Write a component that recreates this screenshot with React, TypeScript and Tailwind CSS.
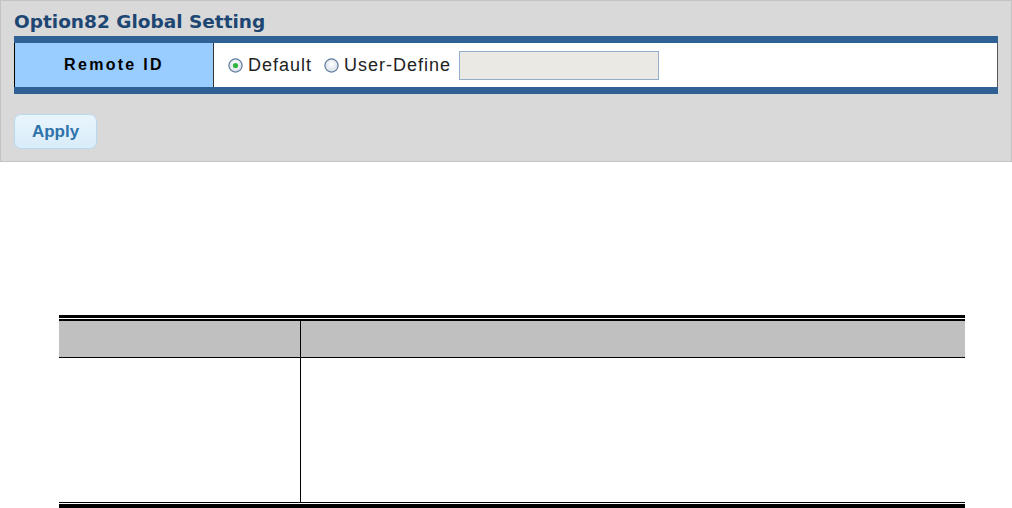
import React from "react";

function Radio({ checked }: { checked: boolean }) {
  return (
    <svg width="15" height="15" viewBox="0 0 15 15" className="shrink-0">
      <defs>
        <radialGradient id={checked ? "rg1" : "rg2"} cx="50%" cy="40%" r="60%">
          <stop offset="0%" stopColor="#ffffff" />
          <stop offset="100%" stopColor="#d6dde6" />
        </radialGradient>
      </defs>
      <circle cx="7.5" cy="7.5" r="6.6" fill={`url(#${checked ? "rg1" : "rg2"})`} stroke="#5f7d9f" strokeWidth="1.2" />
      {checked && <circle cx="7.5" cy="7.5" r="2.6" fill="#2fb43c" />}
    </svg>
  );
}

export default function App() {
  const sans = { fontFamily: '"Liberation Sans", Arial, sans-serif' };
  return (
    <div className="w-[1012px] h-[508px] bg-white overflow-hidden" style={sans}>
      <div className="h-[162px] border border-[#c3c3c3] bg-[#d9d9d9] px-[13px]">
        <div
          className="h-[35px] pt-[10px] text-[18.5px] leading-[22px] font-bold text-[#1d4672] whitespace-nowrap"
          style={{ fontFamily: '"DejaVu Sans", Verdana, sans-serif' }}
        >
          Option82 Global Setting
        </div>
        <div className="flex flex-col w-[984px]">
          <div className="h-[7px] bg-[#2f6195]" />
          <div className="flex h-[44px] bg-white border-l border-black border-r border-r-[#555555]">
            <div className="w-[199px] bg-[#99ccff] border-r border-[#333333] flex items-center justify-center text-[16px] font-bold tracking-[2.3px] text-black">
              Remote ID
            </div>
            <div className="flex-1 flex items-center pl-[14px] text-[18px] tracking-[1px] text-[#222222]">
              <Radio checked />
              <span className="ml-[5px]">Default</span>
              <span className="ml-[12px] flex items-center">
                <Radio checked={false} />
              </span>
              <span className="ml-[5px]">User-Define</span>
              <div className="ml-[8px] w-[200px] h-[29px] bg-[#ebe9e3] border border-[#94aecb]" />
            </div>
          </div>
          <div className="h-[7px] bg-[#2f6195]" />
        </div>
        <div className="mt-[20px] w-[83px] h-[35px] rounded-[7px] border border-[#b9d9f1] bg-gradient-to-b from-[#e9f5fd] to-[#d9ecf9] flex items-center justify-center text-[17px] font-bold text-[#2e73aa]">
          Apply
        </div>
      </div>

      <div className="ml-[59px] mt-[153px] w-[906px] flex flex-col">
        <div className="h-[3px] bg-black" />
        <div className="h-[1px] bg-white" />
        <div className="h-[2px] bg-black" />
        <div className="flex h-[36px] bg-[#c0c0c0]">
          <div className="w-[242px] border-r border-black" />
          <div className="flex-1" />
        </div>
        <div className="h-[1px] bg-black" />
        <div className="flex h-[144px] bg-white">
          <div className="w-[242px] border-r border-black" />
          <div className="flex-1" />
        </div>
        <div className="h-[1px] bg-black" />
        <div className="h-[1px] bg-white" />
        <div className="h-[4px] bg-black" />
      </div>
    </div>
  );
}
